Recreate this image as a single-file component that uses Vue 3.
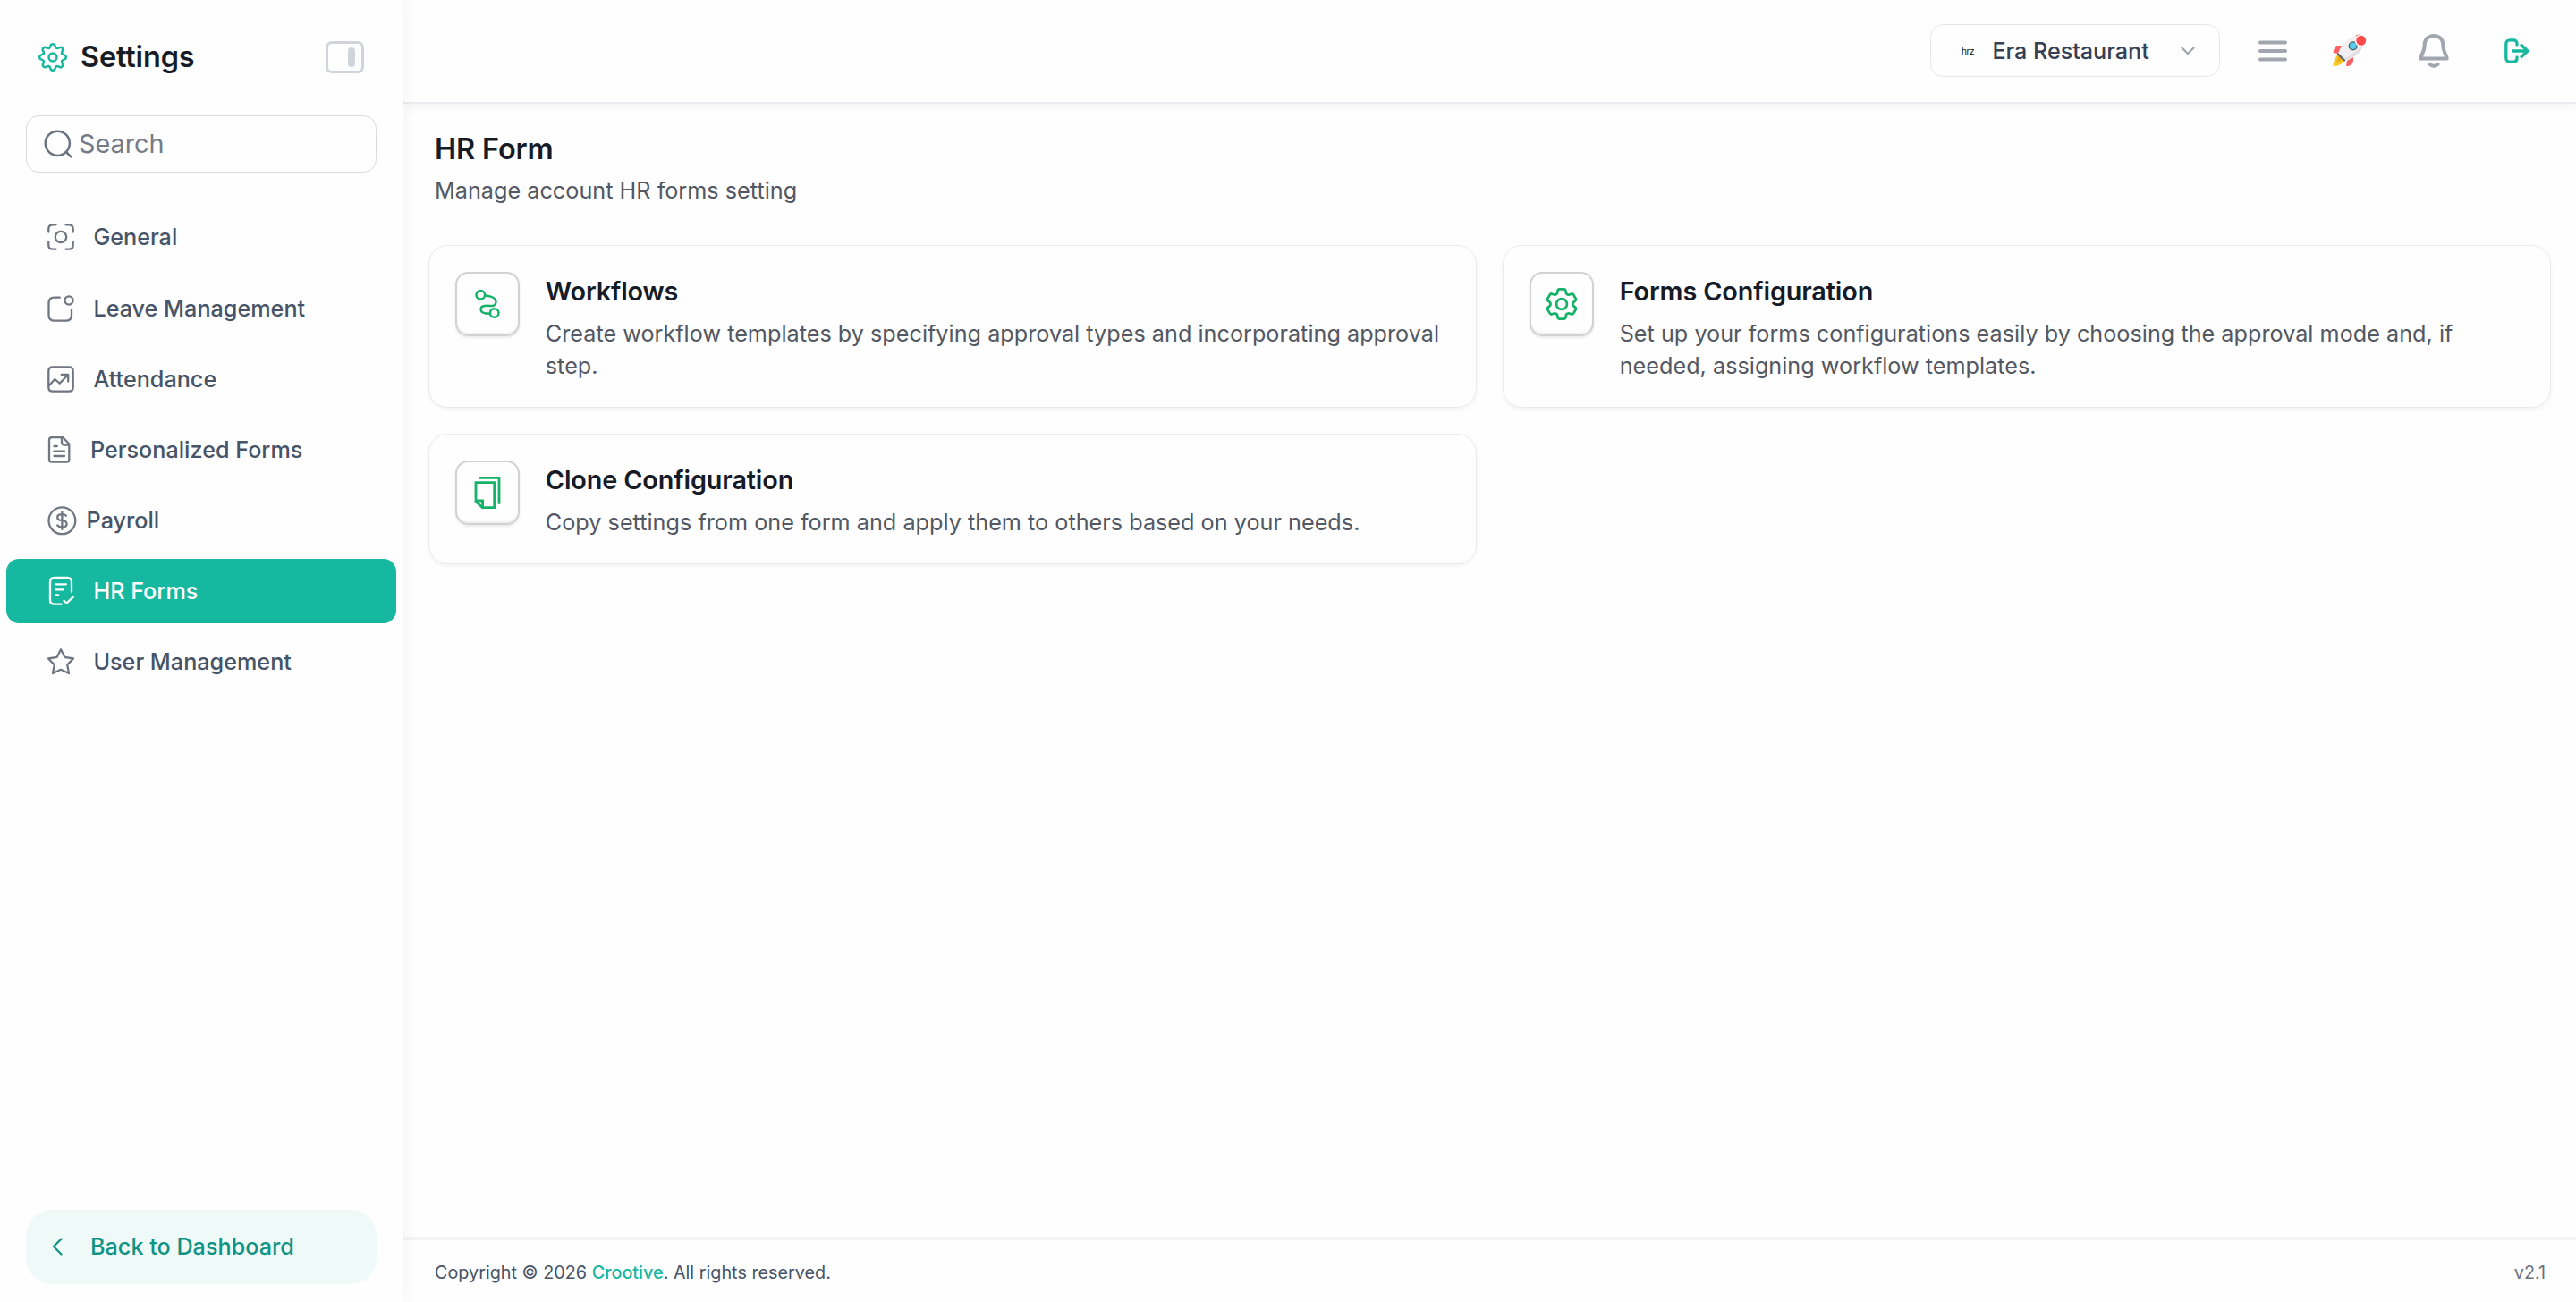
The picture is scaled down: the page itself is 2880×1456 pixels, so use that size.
<template>
  <div class="layout">
    <aside class="sidebar">
      <div class="sidebar-head">
        <svg class="brand-gear" viewBox="-17 -17 34 34">
          <path
            v-for="n in 8"
            :key="n"
            :transform="`rotate(${n * 45})`"
            d="M-4.2-10.2C-1.8-11.2-3.6-14.8 0-14.8S1.8-11.2 4.2-10.2"
          />
          <circle r="4.5" />
        </svg>
        <h1>Settings</h1>
        <svg class="toggle" viewBox="0 0 43 36">
          <rect x="1.5" y="1.5" width="40" height="33" rx="5.5" />
          <rect class="bar" x="25" y="7" width="8" height="22" rx="4" />
        </svg>
      </div>

      <label class="search">
        <svg viewBox="0 0 32 32">
          <circle cx="15.3" cy="15.3" r="13.6" />
          <path d="M25 25l5.3 5.3" />
        </svg>
        <input type="text" placeholder="Search" />
      </label>

      <nav>
        <a
          v-for="item in menu"
          :key="item.label"
          class="nav-item"
          :class="[item.size, { active: item.active }]"
        >
          <svg viewBox="0 0 36 36">
            <path v-for="d in item.paths" :key="d" :d="d" />
          </svg>
          <span>{{ item.label }}</span>
        </a>
      </nav>

      <a class="back">
        <svg viewBox="0 0 14 20"><path d="M11.5 1.5L3 10l8.5 8.5" /></svg>
        <span>Back to Dashboard</span>
      </a>
    </aside>

    <div class="main">
      <header class="topbar">
        <div class="company">
          <span class="company-logo">hrz</span>
          <span class="company-name">Era Restaurant</span>
          <svg viewBox="0 0 16 10"><path d="M1.5 1.5L8 8l6.5-6.5" /></svg>
        </div>
        <svg class="menu-icon" viewBox="0 0 32 24">
          <path d="M2 2.5h28M2 12h28M2 21.6h28" />
        </svg>
        <svg class="rocket" viewBox="0 0 38 37">
          <path class="fin" d="M10 13H5Q2 13 .5 21L6 22zM23 26v4Q22 36 15 36l1-6z" />
          <path class="fin" d="M24.500 3Q26 0 31 .500L29 4z" />
          <path class="flame" d="M6 23Q1 27 .3 36Q9 36 13 30z" />
          <path class="flame-core" d="M6.5 24L4 32L11 29z" />
          <path class="body" d="M6 22Q12 6 25 2.500Q31 1 36 2Q37 9 34 14Q28 26 13 30z" />
          <path class="shade" d="M13 30L11 28Q27 22 34.500 8Q36 10 34 14Q28 26 13 30z" />
          <path class="ring" d="M6 22.500l7 7" />
          <circle class="window" cx="22.700" cy="13.300" r="4.400" />
          <circle class="dot" cx="31.700" cy="7.300" r="6.200" />
        </svg>
        <svg class="bell" viewBox="0 0 34 38">
          <path
            d="M17 2C10.500 2 6.700 6.500 6.700 12C6.700 20 2.300 24.500 2.300 27.500H31.700C31.700 24.500 27.300 20 27.300 12C27.300 6.500 23.500 2 17 2z"
          />
          <path d="M12.500 34Q17 37.500 21.500 34" />
        </svg>
        <svg class="logout" viewBox="0 0 28 28">
          <path
            d="M14 7V5.800Q14 1.800 10 1.800H6.300Q1.800 1.800 1.800 6.300V21.700Q1.800 26.200 6.300 26.200H10Q14 26.200 14 22.200V21"
          />
          <path d="M9.500 14H26M19 7.500L26 14L19 20.500" />
        </svg>
      </header>

      <main class="content">
        <h2>HR Form</h2>
        <p class="subtitle">Manage account HR forms setting</p>
        <div class="cards">
          <section v-for="card in cards" :key="card.title" class="card">
            <div class="card-icon">
              <svg :viewBox="card.viewBox" :class="card.icon">
                <path v-for="d in card.paths" :key="d" :d="d" />
              </svg>
            </div>
            <div class="card-text">
              <h3>{{ card.title }}</h3>
              <p>{{ card.text }}</p>
            </div>
          </section>
        </div>
      </main>

      <footer class="footer">
        <span>Copyright © 2026 <a>Crootive</a>. All rights reserved.</span>
        <span class="version">v2.1</span>
      </footer>
    </div>
  </div>
</template>

<script setup>
const menu = [
  {
    label: 'General',
    paths: [
      'M4.300 12.500V9Q4.300 4.300 9 4.300H12.500M23.500 4.300H27Q31.700 4.300 31.700 9V12.500M31.700 23.500V27Q31.700 31.700 27 31.700H23.500M12.500 31.700H9Q4.300 31.700 4.300 27V23.500',
      'M11.800 18a6.200 6.200 0 1 0 12.400 0a6.200 6.200 0 1 0-12.400 0'
    ]
  },
  {
    label: 'Leave Management',
    size: 'low',
    paths: [
      'M16.800 5.700H11Q4.500 5.700 4.500 12V25.500Q4.500 31.700 11 31.700H23.500Q30 31.700 30 25.500V19.300',
      'M22.400 9a4.600 4.600 0 1 0 9.200 0a4.600 4.600 0 1 0-9.200 0'
    ]
  },
  {
    label: 'Attendance',
    size: 'low',
    paths: [
      'M9 4.300H27Q31.700 4.300 31.700 9V27Q31.700 31.700 27 31.700H9Q4.300 31.700 4.300 27V9Q4.300 4.300 9 4.300z',
      'M5 25L11.300 18L16.700 22.700L26 13.300M18.800 13H26.200V20.500'
    ]
  },
  {
    label: 'Personalized Forms',
    size: 'narrow',
    paths: [
      'M20.500 4.200H8Q5 4.200 5 7V29Q5 31.700 8 31.700H24.500Q27.300 31.700 27.300 29V11.500z',
      'M19 4.500V9.500Q19 12.500 22 12.500H27',
      'M10.500 14H13.800M10.500 19.700H22M10.500 25H22'
    ]
  },
  {
    label: 'Payroll',
    size: 'tight',
    paths: [
      'M4.500 18.300a14.900 14.900 0 1 0 29.800 0a14.900 14.900 0 1 0-29.800 0',
      'M19.400 8.500V28M24 12.700Q22.500 11.200 19.400 11.200C12.500 11.200 12.500 17.700 19.400 18.200C26.500 18.700 26.300 25.600 19.400 25.600Q16 25.600 14.300 23.500'
    ]
  },
  {
    label: 'HR Forms',
    active: true,
    paths: [
      'M18.700 32.700H11Q6 32.700 6 28V8Q6 3 11 3H25Q30 3 30 8V18.700',
      'M12 10.300H24M12 16.300H21M12 22.300H15.200M21.500 28.800L24.500 31.500L31.800 24.700'
    ]
  },
  {
    label: 'User Management',
    paths: [
      'M18 4.200L22.300 12.800L32 14.500L25.200 21.400L27 31L18 26.800L9 31L10.800 21.400L4 14.500L13.700 12.800z'
    ]
  }
]

const cards = [
  {
    title: 'Workflows',
    text: 'Create workflow templates by specifying approval types and incorporating approval step.',
    icon: 'flow',
    viewBox: '0 0 36 36',
    paths: [
      'M5.500 7.700a4.800 4.800 0 1 0 9.600 0a4.800 4.800 0 1 0-9.600 0M20.900 28a4.800 4.800 0 1 0 9.600 0a4.800 4.800 0 1 0-9.600 0',
      'M15.300 8.500C22 9 27.500 11.500 27.500 15.500C27.500 19.300 24.500 20.300 20.500 20C15 19.500 10.500 20 10.500 24C10.500 27.600 14 28.800 20.800 28.800'
    ]
  },
  {
    title: 'Forms Configuration',
    text: 'Set up your forms configurations easily by choosing the approval mode and, if needed, assigning workflow templates.',
    icon: 'cog',
    viewBox: '2.27 2.27 19.46 19.46',
    paths: [
      'M9.594 3.94c.09-.542.56-.94 1.11-.94h2.593c.55 0 1.02.398 1.11.94l.213 1.281c.063.374.313.686.645.87.074.04.147.083.22.127.325.196.72.257 1.075.124l1.217-.456a1.125 1.125 0 0 1 1.37.49l1.296 2.247a1.125 1.125 0 0 1-.26 1.431l-1.003.827c-.293.241-.438.613-.43.992a7.723 7.723 0 0 1 0 .255c-.008.378.137.75.43.991l1.004.827c.424.35.534.955.26 1.43l-1.298 2.247a1.125 1.125 0 0 1-1.369.491l-1.217-.456c-.355-.133-.75-.072-1.076.124a6.47 6.47 0 0 1-.22.128c-.331.183-.581.495-.644.869l-.213 1.281c-.09.543-.56.94-1.11.94h-2.594c-.55 0-1.019-.398-1.11-.94l-.213-1.281c-.062-.374-.312-.686-.644-.87a6.52 6.52 0 0 1-.22-.127c-.325-.196-.72-.257-1.076-.124l-1.217.456a1.125 1.125 0 0 1-1.369-.49l-1.297-2.247a1.125 1.125 0 0 1 .26-1.431l1.004-.827c.292-.24.437-.613.43-.991a6.932 6.932 0 0 1 0-.255c.007-.38-.138-.751-.43-.992l-1.004-.827a1.125 1.125 0 0 1-.26-1.43l1.297-2.247a1.125 1.125 0 0 1 1.37-.491l1.216.456c.356.133.751.072 1.076-.124.072-.044.146-.086.22-.128.332-.183.582-.495.644-.869l.214-1.28Z',
      'M8.800 12a3.200 3.200 0 1 0 6.400 0a3.200 3.200 0 1 0-6.400 0'
    ]
  },
  {
    title: 'Clone Configuration',
    text: 'Copy settings from one form and apply them to others based on your needs.',
    icon: 'copy',
    viewBox: '0 0 36 36',
    paths: [
      'M9 1.400H31V30.700',
      'M5 6.700H25.700V34.600H12.300L5 27.800z',
      'M5 27H12.600V34.600'
    ]
  }
]
</script>

<style>
body {
  background: #fefefe;
}
</style>

<style scoped>
.layout {
  display: flex;
  width: 100%;
  height: 100vh;
  overflow: hidden;
  font-family: Inter, 'Liberation Sans', sans-serif;
  font-size: 25.2px;
  color: #475467;
}
h1,
h2,
h3,
p {
  margin: 0;
  font-weight: 600;
  letter-spacing: -0.12px;
  color: #161b26;
}
svg {
  display: block;
  flex: none;
  fill: none;
  stroke: currentColor;
  stroke-width: 2.3;
  stroke-linecap: round;
  stroke-linejoin: round;
}

/* sidebar */
.sidebar {
  position: relative;
  z-index: 2;
  display: flex;
  flex-direction: column;
  flex: none;
  box-sizing: border-box;
  width: 450px;
  padding-bottom: 20px;
  background: #fefefe;
  box-shadow: 0 0 18px rgba(0, 0, 0, 0.06);
}
.sidebar-head {
  display: flex;
  align-items: center;
  height: 128px;
  box-sizing: border-box;
  padding: 0 43px 0 42px;
}
.brand-gear {
  width: 34px;
  height: 34px;
  color: #17b8a0;
  stroke-width: 2.5;
}
.sidebar-head h1 {
  flex: 1;
  margin-left: 14px;
  font-size: 32.4px;
  line-height: 46px;
}
.toggle {
  width: 43px;
  height: 36px;
  color: #d1d5db;
  stroke-width: 3;
}
.toggle .bar {
  fill: currentColor;
  stroke: none;
}
.search {
  display: flex;
  align-items: center;
  height: 64px;
  box-sizing: border-box;
  margin: 1px 29px 0;
  padding: 0 19px;
  border: 1px solid #d8dade;
  border-radius: 14.4px;
  color: #6b7280;
}
.search svg {
  width: 32px;
  height: 32px;
  stroke-width: 2.5;
}
.search input {
  width: 300px;
  padding: 0 0 2px;
  margin-left: 7px;
  border: 0;
  outline: 0;
  background: none;
  font: 400 28.8px Inter, sans-serif;
}
.search input::placeholder {
  color: #757b87;
}
nav {
  display: flex;
  flex-direction: column;
  gap: 7.2px;
  margin: 36px 7px 0;
}
.nav-item {
  display: flex;
  align-items: center;
  height: 72px;
  box-sizing: border-box;
  padding-left: 43px;
  border-radius: 14.4px;
  font-weight: 500;
}
.nav-item.low {
  padding-top: 1.5px;
}
.nav-item svg {
  width: 36px;
  height: 36px;
  margin-right: 18.4px;
  color: #717683;
}
.nav-item.narrow svg {
  margin-right: 15px;
}
.nav-item.tight svg {
  margin-right: 10.600px;
}
.nav-item.active,
.nav-item.active svg {
  color: #fff;
}
.nav-item.active {
  background: #17b8a0;
}
.back {
  display: flex;
  align-items: center;
  height: 83px;
  box-sizing: border-box;
  margin: auto 29px 0;
  padding: 0 0 1px 28px;
  border-radius: 28.8px;
  background: #effaf8;
  color: #0e9384;
  font-weight: 500;
}
.back svg {
  width: 14px;
  height: 20px;
  margin-right: 30px;
}

/* main column */
.main {
  display: flex;
  flex-direction: column;
  flex: 1;
  min-width: 0;
}
.topbar {
  display: flex;
  align-items: center;
  justify-content: flex-end;
  height: 116px;
  box-sizing: border-box;
  padding: 0 52px 1px 0;
  border-bottom: 2px solid #e9ebf0;
  box-shadow: 0 2px 12px rgba(0, 0, 0, 0.05);
}
.company {
  display: flex;
  align-items: center;
  box-sizing: border-box;
  width: 324px;
  height: 59px;
  padding: 0 27px 0 34px;
  border: 1px solid #e5e7eb;
  border-radius: 14.4px;
}
.company-logo {
  width: 34.400px;
  font-size: 10px;
  letter-spacing: -0.3px;
  color: #111;
}
.company-name {
  flex: 1;
  font-weight: 500;
  letter-spacing: -0.050px;
  color: #344054;
}
.company svg {
  width: 16px;
  height: 10px;
  color: #a1a6ae;
}
.menu-icon {
  width: 32px;
  height: 24px;
  margin-left: 43px;
  color: #a0a5ae;
  stroke-width: 4;
}
.rocket {
  width: 38px;
  height: 37px;
  margin-left: 51px;
}
.rocket path {
  stroke: none;
}
.rocket .fin {
  fill: #fa5f63;
}
.rocket .flame {
  fill: #fcca27;
}
.rocket .flame-core {
  fill: #ecae18;
}
.rocket .body {
  fill: #f1eff1;
}
.rocket .shade {
  fill: #e2e0e3;
}
.rocket .ring {
  stroke: #5b6166;
  stroke-width: 2.2;
}
.rocket .window {
  fill: #56cdee;
  stroke: #526069;
  stroke-width: 1.4;
}
.rocket .dot {
  fill: #ff4a4c;
  stroke: #fff;
  stroke-width: 1.4;
}
.bell {
  width: 34px;
  height: 38px;
  margin-left: 58px;
  color: #a0a5ae;
  stroke-width: 4;
}
.logout {
  width: 28px;
  height: 28px;
  margin-left: 62px;
  color: #17b8a0;
  stroke-width: 3.3;
}
.content {
  flex: 1;
  padding: 27px 28px 0 29px;
}
.content h2 {
  padding-left: 7px;
  font-size: 32.4px;
  line-height: 48px;
}
.content p {
  font-weight: 400;
  line-height: 36px;
  letter-spacing: 0.020px;
  color: #535862;
}
.content .subtitle {
  padding-left: 7px;
  margin-top: 4px;
}
.cards {
  display: grid;
  grid-template-columns: 1fr 1fr;
  gap: 29px 28.8px;
  margin-top: 43px;
}
.card {
  display: flex;
  gap: 28.8px;
  box-sizing: border-box;
  padding: 29px;
  border: 1px solid #e9eaeb;
  border-radius: 21.6px;
  box-shadow: 0 2px 4px rgba(10, 13, 18, 0.05);
}
.card-icon {
  display: flex;
  align-items: center;
  justify-content: center;
  flex: none;
  box-sizing: border-box;
  width: 72px;
  height: 72px;
  border: 2px solid #d2d2d3;
  border-radius: 14.4px;
  box-shadow: 0 2px 3px rgba(10, 13, 18, 0.08), inset 0 -2px 2px rgba(10, 13, 18, 0.06);
  color: #17b26a;
}
.card-icon svg {
  width: 36px;
  height: 36px;
  stroke-width: 2.5;
}
.card-icon .cog {
  stroke-width: 1.5;
}
.card-icon .copy {
  stroke-width: 2.8;
  stroke-linecap: butt;
  stroke-linejoin: miter;
}
.card-text h3 {
  font-size: 28.8px;
  line-height: 43px;
}
.card-text p {
  margin-top: 7.6px;
  margin-bottom: -0.6px;
}
.footer {
  display: flex;
  align-items: center;
  justify-content: space-between;
  height: 73px;
  box-sizing: border-box;
  padding: 3px 34px 0 36px;
  border-top: 4px solid #f3f4f7;
  font-size: 19.8px;
}
.footer a {
  font-weight: 500;
  color: #17b8a0;
}
.version {
  color: #6b7280;
}
</style>
